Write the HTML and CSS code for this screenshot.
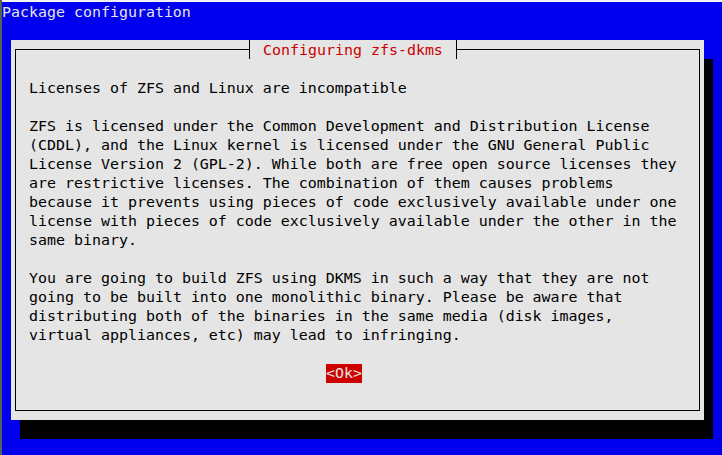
FILE: index.html
```html
<!DOCTYPE html>
<html lang="en">
<head>
<meta charset="utf-8">
<title>Package configuration</title>
<link rel="stylesheet" href="styles.css">
</head>
<body>
<div class="frame">
  <div class="term">
    <div class="row header">Package configuration</div>
    <div class="row"></div>
    <div class="dialog">
      <div class="box">
        <div class="title">Configuring zfs-dkms</div>
        <div class="content">
          <p>Licenses of ZFS and Linux are incompatible</p>
          <p>ZFS is licensed under the Common Development and Distribution License<br>(CDDL), and the Linux kernel is licensed under the GNU General Public<br>License Version 2 (GPL-2). While both are free open source licenses they<br>are restrictive licenses. The combination of them causes problems<br>because it prevents using pieces of code exclusively available under one<br>license with pieces of code exclusively available under the other in the<br>same binary.</p>
          <p>You are going to build ZFS using DKMS in such a way that they are not<br>going to be built into one monolithic binary. Please be aware that<br>distributing both of the binaries in the same media (disk images,<br>virtual appliances, etc) may lead to infringing.</p>
          <div class="buttons"><span class="btn">&lt;Ok&gt;</span></div>
        </div>
      </div>
    </div>
  </div>
</div>
</body>
</html>
```

FILE: styles.css
```css
html, body {
  margin: 0;
  padding: 0;
  background: #f2f2f2;
  overflow: hidden;
}

.frame {
  width: 722px;
  height: 455px;
  padding-top: 2px;
  padding-left: 2px;
  box-sizing: border-box;
  background: linear-gradient(to right, #56605a 0, #56605a 2px, #f2f2f2 2px);
}

.term {
  width: 720px;
  height: 453px;
  background: #0000ee;
  color: #e5e5e5;
  font-family: "DejaVu Sans Mono", monospace;
  font-size: 14.95px;
  line-height: 19px;
  overflow: hidden;
}

.row {
  height: 19px;
  box-sizing: border-box;
  white-space: pre;
}

.header {
  padding-top: 1px;
}

.dialog {
  margin-left: 9px;
  width: 693px;
  height: 380px;
  box-sizing: border-box;
  padding: 9px 4px;
  background: #e5e5e5;
  box-shadow: 9px 19px 0 #000;
  color: #000;
}

.box {
  position: relative;
  height: 100%;
  box-sizing: border-box;
  border: 1px solid #000;
}

.title {
  position: absolute;
  left: 233px;
  top: -10px;
  height: 19px;
  box-sizing: border-box;
  padding: 1px 13px 0;
  line-height: 19px;
  background: #e5e5e5;
  color: #cd0000;
  border-left: 1px solid #000;
  border-right: 1px solid #000;
  white-space: pre;
  overflow: hidden;
}

.title::before,
.title::after {
  content: "";
  position: absolute;
  top: 9px;
  width: 4px;
  height: 1px;
  background: #000;
}

.title::before { left: -5px; }
.title::after { right: -5px; }

.content {
  padding: 29px 0 0 13px;
  display: flex;
  flex-direction: column;
  gap: 19px;
}

.content p {
  margin: 0;
  white-space: nowrap;
}

.buttons {
  padding-left: 297px;
  height: 19px;
}

.btn {
  display: inline-block;
  height: 19px;
  background: #cd0000;
  color: #e5e5e5;
}
```
